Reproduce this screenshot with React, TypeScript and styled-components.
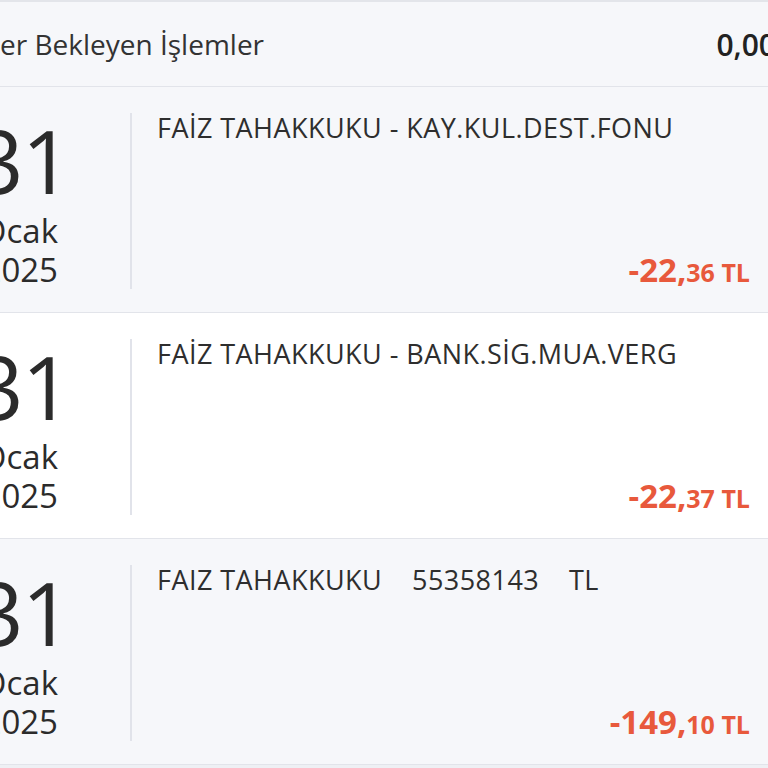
import React from "react";
import styled, { createGlobalStyle } from "styled-components";

const Global = createGlobalStyle`
  html, body { margin: 0; padding: 0; background: #eef0f4; }
  body { font-family: "Open Sans", "Noto Sans", sans-serif; color: #2e2e2e; }
`;

const Frame = styled.div`
  width: 768px;
  height: 768px;
  overflow: hidden;
  background: #eef0f4;
  border-top: 2px solid #e3e5ea;
  box-sizing: border-box;
`;

const Header = styled.div`
  height: 84px;
  display: flex;
  align-items: center;
  justify-content: space-between;
  background: #f6f7fa;
  border-bottom: 1px solid #e2e4ea;
  white-space: nowrap;
`;

const HeaderLabel = styled.span`
  font-size: 28px;
  color: #333;
`;

const HeaderValue = styled.span`
  font-size: 30px;
  font-weight: 600;
  color: #222;
  margin-right: -8px;
`;

const Row = styled.div<{ $white?: boolean }>`
  height: 226px;
  display: flex;
  background: ${(p) => (p.$white ? "#ffffff" : "#f6f7fa")};
  border-bottom: 1px solid #e2e4ea;
  box-sizing: border-box;
`;

const DateCol = styled.div`
  width: 130px;
  flex: none;
  box-sizing: border-box;
  padding: 22px 72px 0 0;
  display: flex;
  flex-direction: column;
  align-items: flex-end;
  color: #2b2b2b;
  white-space: nowrap;
`;

const Day = styled.div`
  font-size: 88px;
  font-weight: 400;
  line-height: 102px;
  letter-spacing: -2px;
  margin-right: -12px;
`;

const Month = styled.div`
  font-size: 33px;
  line-height: 39px;
  font-weight: 400;
`;

const Divider = styled.div`
  width: 2px;
  flex: none;
  margin: 26px 0 23px;
  background: #e1e3ea;
`;

const Content = styled.div`
  flex: 1;
  display: flex;
  flex-direction: column;
  justify-content: space-between;
  padding: 22px 18px 20px 25px;
`;

const Desc = styled.div`
  font-size: 27px;
  color: #2e2e2e;
  letter-spacing: 0.45px;
  white-space: pre;
`;

const Amount = styled.div`
  align-self: flex-end;
  color: #e8593c;
  font-weight: 700;
  white-space: nowrap;
`;

const AmountMain = styled.span`
  font-size: 33px;
`;

const AmountCents = styled.span`
  font-size: 25px;
`;

const items = [
  { desc: "FAİZ TAHAKKUKU - KAY.KUL.DEST.FONU", main: "-22,", cents: "36 TL", white: false },
  { desc: "FAİZ TAHAKKUKU - BANK.SİG.MUA.VERG", main: "-22,", cents: "37 TL", white: true },
  { desc: "FAIZ TAHAKKUKU    55358143    TL", main: "-149,", cents: "10 TL", white: false },
];

export default function App() {
  return (
    <Frame>
      <Global />
      <Header>
        <HeaderLabel>er Bekleyen İşlemler</HeaderLabel>
        <HeaderValue>0,00</HeaderValue>
      </Header>
      {items.map((it, i) => (
        <Row key={i} $white={it.white}>
          <DateCol>
            <Day>31</Day>
            <Month>Ocak</Month>
            <Month>2025</Month>
          </DateCol>
          <Divider />
          <Content>
            <Desc>{it.desc}</Desc>
            <Amount>
              <AmountMain>{it.main}</AmountMain>
              <AmountCents>{it.cents}</AmountCents>
            </Amount>
          </Content>
        </Row>
      ))}
    </Frame>
  );
}
